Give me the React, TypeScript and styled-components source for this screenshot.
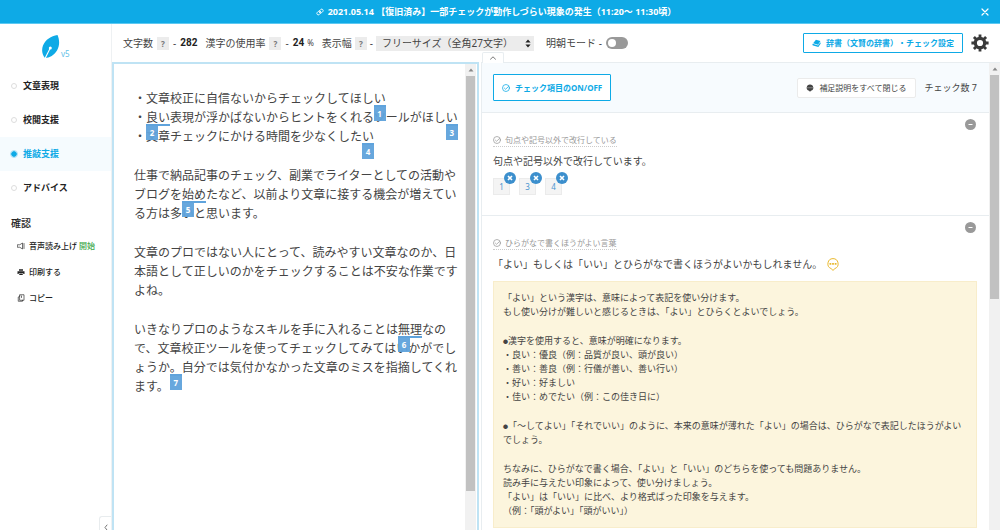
import React, { useState } from "react";
import styled, { createGlobalStyle, css } from "styled-components";

const blue = "#0eaae6";
const paleBlue = "#bfe3f4";
const markBlue = "#5fa3dc";
const ink = "#444";

const GlobalStyle = createGlobalStyle`
  *, *::before, *::after { box-sizing: border-box; }
  body {
    margin: 0;
    background: #fff;
    color: ${ink};
    font-family: "Noto Sans", "Noto Sans CJK JP", sans-serif;
    font-size: 10px;
    line-height: 14px;
  }
  button, select, input { font: inherit; color: inherit; margin: 0; }
  button { padding: 0; border: 0; background: none; cursor: pointer; }
  p, h1, h2, h3, ul { margin: 0; padding: 0; font-weight: inherit; font-size: inherit; }
  ul { list-style: none; }
  svg { display: block; flex: none; }
`;

const Shell = styled.div`
  display: flex;
  flex-direction: column;
  height: 100vh;
  overflow: hidden;
`;

const Notice = styled.div`
  display: flex;
  align-items: center;
  flex: none;
  height: 24px;
  padding: 0 10px 0 12px;
  background: ${blue};
  border-bottom: 1px solid #5cc9f2;
  color: #fff;
`;

const NoticeLink = styled.a`
  display: flex;
  align-items: center;
  justify-content: center;
  gap: 4px;
  flex: 1;
  color: inherit;
  font-size: 9px;
  font-weight: 700;
  text-decoration: none;
  text-spacing-trim: space-all;
  white-space: nowrap;
`;

const Body = styled.div`
  display: grid;
  grid-template-columns: 112px minmax(0, 1fr);
  flex: 1;
  min-height: 0;
`;

const Sidebar = styled.aside`
  display: flex;
  flex-direction: column;
  border-right: 1px solid #eef1f3;
  min-height: 0;
`;

const Logo = styled.div`
  display: flex;
  align-items: flex-end;
  gap: 1px;
  height: 45px;
  padding: 0 0 10px 42px;
  color: #63bfe8;
  font-size: 8px;
  line-height: 10px;
`;

const NavItem = styled.label<{ $active: boolean }>`
  display: flex;
  align-items: center;
  gap: 6px;
  height: 34px;
  padding-left: 11px;
  color: #222;
  font-size: 9px;
  font-weight: 700;
  cursor: pointer;
  ${(p) => p.$active && css`background: #f5fbfe; color: ${blue};`}
`;

const Radio = styled.input`
  appearance: none;
  width: 6px;
  height: 6px;
  border: 1px solid #ddd;
  border-radius: 50%;
  &:checked {
    border-color: ${blue};
    background: ${blue};
    outline: 1px solid #a9dff5;
  }
`;

const ToolsHeading = styled.h2`
  margin-top: 8px;
  padding-left: 11px;
  color: #222;
  font-size: 10px;
  font-weight: 500;
  line-height: 20px;
`;

const ToolButton = styled.button`
  display: flex;
  align-items: center;
  gap: 4px;
  height: 26px;
  padding-left: 17px;
  color: #222;
  font-size: 8px;
  font-weight: 500;
`;

const Start = styled.span`
  color: #3fa94c;
  margin-left: -2px;
`;

const CollapseSide = styled.button`
  display: flex;
  justify-content: center;
  align-items: flex-end;
  align-self: flex-end;
  width: 12px;
  height: 14px;
  margin-top: auto;
  border: 1px solid #e8ecee;
  border-width: 1px 0 0 1px;
  border-radius: 3px 0 0 0;
`;

const Main = styled.main`
  display: flex;
  flex-direction: column;
  min-width: 0;
  min-height: 0;
`;

const Toolbar = styled.div`
  display: flex;
  align-items: center;
  flex: none;
  height: 38px;
  padding: 0 11px;
  white-space: nowrap;
`;

const Stat = styled.div`
  display: flex;
  align-items: center;
  gap: 4px;
  margin-right: 8px;
`;

const Field = styled(Stat)`
  gap: 3px;
  margin-right: 12px;
`;

const Value = styled.strong`
  color: #222;
  font-family: Roboto, sans-serif;
  font-size: 10px;
`;

const Unit = styled.span`
  font-size: 8px;
  margin-left: -1px;
`;

const Help = styled.button`
  width: 12px;
  height: 13px;
  background: #ececec;
  color: #777;
  font-size: 8px;
  font-weight: 700;
  line-height: 13px;
`;

const SelectWrap = styled.span`
  display: flex;
  align-items: center;
  width: 158px;
  height: 15px;
  padding-right: 3px;
  background: #ececec;
`;

const WidthSelect = styled.select`
  appearance: none;
  flex: 1;
  min-width: 0;
  height: 15px;
  padding: 0 0 0 6px;
  border: 0;
  background: none;
  line-height: 15px;
`;

const Switch = styled.input`
  appearance: none;
  display: flex;
  align-items: center;
  width: 22px;
  height: 12px;
  padding: 0 2px;
  border-radius: 6px;
  background: #999;
  cursor: pointer;
  &::before {
    content: "";
    width: 8px;
    height: 8px;
    border-radius: 50%;
    background: #fff;
  }
  &:checked { background: ${blue}; justify-content: flex-end; }
`;

const OutlineButton = styled.button<{ $tall?: boolean }>`
  display: flex;
  align-items: center;
  justify-content: center;
  gap: 5px;
  height: ${(p) => (p.$tall ? 27 : 20)}px;
  padding: 0 8px;
  border: 1px solid ${blue};
  border-radius: 1px;
  background: #fff;
  color: ${blue};
  font-size: 8px;
  font-weight: 700;
  white-space: nowrap;
`;

const DictionaryButton = styled(OutlineButton)`
  margin: 0 8px 0 auto;
  text-spacing-trim: space-all;
`;

const Panes = styled.div`
  display: grid;
  grid-template-columns: minmax(0, 367fr) minmax(0, 519fr);
  gap: 2px;
  flex: 1;
  min-height: 0;
`;

const Editor = styled.section`
  display: flex;
  min-height: 0;
  padding-right: 1px;
  border: 2px solid ${paleBlue};
  border-bottom: 0;
`;

const Draft = styled.article`
  flex: 1;
  min-width: 0;
  padding: 25px 7px 0 20px;
  font-size: 12px;
  line-height: 19px;
  white-space: nowrap;
`;

const Paragraph = styled.p`
  margin-bottom: 20px;
`;

const Mark = styled.span`
  position: relative;
  &::after {
    content: "";
    position: absolute;
    left: 0;
    right: 0;
    bottom: 0;
    height: 2px;
    background: ${markBlue};
  }
`;

const MarkNumber = styled.span`
  position: absolute;
  top: 100%;
  left: 0;
  width: 12px;
  height: 14px;
  background: ${markBlue};
  opacity: 0.95;
  color: #fff;
  font-size: 8px;
  font-weight: 700;
  line-height: 14px;
  text-align: center;
`;

const Track = styled.div`
  display: flex;
  flex-direction: column;
  align-items: center;
  flex: none;
  width: 11px;
  background: #f1f1f1;
`;

const TrackArrow = styled.div`
  display: flex;
  align-items: center;
  justify-content: center;
  flex: none;
  height: 12px;
`;

const Thumb = styled.div<{ $share: number }>`
  width: 9px;
  height: ${(p) => p.$share}%;
  background: #c1c1c1;
`;

const Results = styled.section`
  position: relative;
  display: flex;
  min-height: 0;
  border-top: 1px solid #e8edf0;
  border-left: 1px solid #e8edf0;
`;

const FoldTab = styled.button`
  position: absolute;
  left: 0;
  bottom: 100%;
  display: flex;
  align-items: center;
  justify-content: center;
  width: 22px;
  height: 11px;
  border: 1px solid #e8edf0;
  border-bottom: 0;
  border-radius: 2px 2px 0 0;
  background: #fff;
`;

const ResultsScroll = styled.div`
  flex: 1;
  min-width: 0;
  overflow: hidden;
`;

const ResultsHead = styled.header`
  display: flex;
  align-items: center;
  height: 50px;
  padding: 0 12px 0 11px;
  border-bottom: 1px solid #e8edf0;
  background: #f7fbfe;
`;

const QuietButton = styled.button`
  display: flex;
  align-items: center;
  justify-content: center;
  gap: 5px;
  height: 20px;
  margin: 0 9px 0 auto;
  padding: 0 8px;
  border: 1px solid #ebebeb;
  border-radius: 2px;
  background: #fff;
  font-size: 8px;
`;

const Count = styled.span`
  font-size: 9px;
`;

const Issue = styled.article`
  position: relative;
  padding: 20px 12px 20px 11px;
  border-bottom: 1px solid #e8edf0;
`;

const Remove = styled.button`
  position: absolute;
  top: 6px;
  right: 13px;
  display: flex;
  align-items: center;
  justify-content: center;
  width: 11px;
  height: 11px;
  border-radius: 50%;
  background: #999;
`;

const IssueLabel = styled.h3`
  display: flex;
  align-items: center;
  gap: 4px;
  width: fit-content;
  height: 14px;
  border-bottom: 1px dotted #ccc;
  color: #999;
  font-size: 8px;
`;

const IssueTitle = styled.p`
  display: flex;
  align-items: center;
  gap: 5px;
  margin: 5px 0 8px;
  font-size: 10px;
  line-height: 18px;
`;

const Chips = styled.ul`
  display: flex;
  gap: 9px;
`;

const Chip = styled.li`
  position: relative;
  width: 17px;
  height: 17px;
  border: 1px solid #ebebeb;
  background: #f4f4f4;
  color: #4a95cf;
  font-size: 8px;
  line-height: 15px;
  text-align: center;
`;

const ChipClose = styled.button`
  position: absolute;
  top: -7px;
  right: -7px;
  display: flex;
  align-items: center;
  justify-content: center;
  width: 12px;
  height: 12px;
  border-radius: 50%;
  background: #3c8fcd;
`;

const Explanation = styled.div`
  display: flex;
  flex-direction: column;
  gap: 15px;
  padding: 9px;
  border: 1px solid #f8edcb;
  background: #fcf5dd;
  font-size: 9px;
  line-height: 14px;
`;

const Bullet = styled.span`
  font-size: 5px;
  vertical-align: 1px;
  line-height: 1;
`;

const strokeProps = {
  fill: "none",
  stroke: "currentColor",
  strokeLinecap: "round",
  strokeLinejoin: "round",
} as const;

const LinkIcon = () => (
  <svg width="8" height="8" viewBox="0 0 16 16" {...strokeProps} strokeWidth="1.8">
    <path d="M7 9.5a3 3 0 0 1 0-4l3-3a3 3 0 0 1 4 4l-3 3a3 3 0 0 1-2.500 .6" />
    <path d="M9 6.500a3 3 0 0 1 0 4l-3 3a3 3 0 0 1-4-4l3-3a3 3 0 0 1 2.500-.6" />
  </svg>
);

const CloseIcon = () => (
  <svg width="10" height="10" viewBox="0 0 10 10" {...strokeProps} strokeWidth="1.200">
    <path d="M2 2l6 6M8 2l-6 6" />
  </svg>
);

const LeafIcon = () => (
  <svg width="18" height="24" viewBox="0 0 18 24">
    <path
      d="M15.500 0C9 1.200 3.500 4.500 1 10.500c-1.500 4-1.200 8.500 2 12.500 4.500 0 9.500-3 12-7.500C18 10.500 17.500 4.500 15.500 0z"
      fill={blue}
    />
    <circle cx="8.300" cy="13" r="1.500" fill="#fff" />
    <path d="M8.300 13L3 23.500" stroke="#fff" strokeWidth="1.100" fill="none" />
  </svg>
);

const SpeakerIcon = () => (
  <svg width="8" height="8" viewBox="0 0 16 16" {...strokeProps} strokeWidth="1.300">
    <path d="M1.500 5.500h4L11 2v12l-5.500-3.500h-4zM14 3v10" />
  </svg>
);

const PrinterIcon = () => (
  <svg width="8" height="8" viewBox="0 0 16 16" fill="currentColor">
    <path d="M4 2.500h8v3H4zM1 6.500h14v5.500h-2.500v-2h-9v2H1zM4.500 11h7v3h-7z" />
  </svg>
);

const CopyIcon = () => (
  <svg width="8" height="8" viewBox="0 0 16 16" {...strokeProps} strokeWidth="1.300">
    <path d="M6 1.500h8v11H6zM6 4L2.500 6v8.500H11v-2M9 4v3" />
  </svg>
);

const SortIcon = () => (
  <svg width="6" height="9" viewBox="0 0 6 9" fill="#222">
    <path d="M3 0.500L5.600 3.600H0.400zM3 8.500L0.400 5.400h5.200z" />
  </svg>
);

const BookIcon = () => (
  <svg width="9" height="9" viewBox="0 0 16 16" fill="currentColor">
    <path d="M7 1.500l8 2.200-4.200 6.300L2 7.500zM1.200 8.500l9.600 3 3.800-5.600.9 2-4.200 6.300L2 11.700C.5 11 .6 9.400 1.200 8.500z" />
  </svg>
);

const GearIcon = () => (
  <svg width="18" height="18" viewBox="0 0 18 18" fill="none" stroke="#3a3a3a">
    <circle cx="9" cy="9" r="4.700" strokeWidth="3.200" />
    {[0, 45, 90, 135].map((angle) => (
      <path
        key={angle}
        d="M9 0.400v3.200M9 14.400v3.200"
        strokeWidth="2.800"
        transform={`rotate(${angle} 9 9)`}
      />
    ))}
  </svg>
);

const CheckCircleIcon = () => (
  <svg width="8" height="8" viewBox="0 0 16 16" {...strokeProps} strokeWidth="1.500">
    <circle cx="8" cy="8" r="7" />
    <path d="M4.800 8.200l2.400 2.300L13 5" />
  </svg>
);

const BubbleIcon = () => (
  <svg width="8" height="8" viewBox="0 0 16 16">
    <path d="M8 1a6.500 6.500 0 0 1 2 12.700L8 15.500l-2-1.800A6.500 6.500 0 0 1 8 1z" fill="#444" />
    <path d="M1 7.500h14" stroke="#999" strokeWidth="1.500" />
  </svg>
);

const HintIcon = () => (
  <svg width="12" height="13" viewBox="0 0 12 13" fill="none" stroke="#e9b92f">
    <path d="M6 0.600a5.200 5.200 0 0 1 1.900 10L6 12.400l-1.900-1.800A5.200 5.200 0 0 1 6 0.600z" />
    <path d="M2.500 5.900h7" strokeWidth="1.600" strokeDasharray="1.800 0.800" />
  </svg>
);

const Chevron = ({ left }: { left?: boolean }) => (
  <svg width="8" height="8" viewBox="0 0 8 8" {...strokeProps} stroke="#777">
    <path d={left ? "M5 3L3 5.500L5 8" : "M1.500 5.200L4 2.800l2.500 2.400"} />
  </svg>
);

const MinusIcon = () => (
  <svg width="7" height="7" viewBox="0 0 7 7">
    <path d="M1.500 3.500h4" stroke="#fff" />
  </svg>
);

const CrossIcon = () => (
  <svg width="6" height="6" viewBox="0 0 6 6">
    <path d="M1 1l4 4M5 1L1 5" stroke="#fff" strokeWidth="1.600" />
  </svg>
);

const ScrollBar = ({ share }: { share: number }) => (
  <Track aria-hidden="true">
    <TrackArrow>
      <svg width="6" height="4" viewBox="0 0 6 4" fill="#888">
        <path d="M3 0.500L5.500 3.500h-5z" />
      </svg>
    </TrackArrow>
    <Thumb $share={share} />
  </Track>
);

const Flag = ({ n, children }: { n: number; children: React.ReactNode }) => (
  <Mark>
    {children}
    <MarkNumber>{n}</MarkNumber>
  </Mark>
);

const modes = ["文章表現", "校閲支援", "推敲支援", "アドバイス"];

export default function App() {
  const [mode, setMode] = useState("推敲支援");

  return (
    <Shell>
      <GlobalStyle />
      <Notice>
        <NoticeLink href="#notice">
          <LinkIcon />
          2021.05.14 【復旧済み】一部チェックが動作しづらい現象の発生（11:20〜 11:30頃）
        </NoticeLink>
        <button aria-label="閉じる"><CloseIcon /></button>
      </Notice>
      <Body>
        <Sidebar>
          <Logo><LeafIcon />v5</Logo>
          <nav>
            {modes.map((name) => (
              <NavItem key={name} $active={mode === name}>
                <Radio type="radio" name="mode" checked={mode === name} onChange={() => setMode(name)} />
                {name}
              </NavItem>
            ))}
          </nav>
          <ToolsHeading>確認</ToolsHeading>
          <ToolButton><SpeakerIcon />音声読み上げ <Start>開始</Start></ToolButton>
          <ToolButton><PrinterIcon />印刷する</ToolButton>
          <ToolButton><CopyIcon />コピー</ToolButton>
          <CollapseSide aria-label="サイドバーを閉じる"><Chevron left /></CollapseSide>
        </Sidebar>
        <Main>
          <Toolbar>
            <Stat>文字数 <Help>?</Help> - <Value>282</Value></Stat>
            <Stat>漢字の使用率 <Help>?</Help> - <Value>24</Value><Unit>%</Unit></Stat>
            <Field>
              <label htmlFor="width">表示幅</label> <Help>?</Help> -
              <SelectWrap>
                <WidthSelect id="width"><option>フリーサイズ（全角27文字）</option></WidthSelect>
                <SortIcon />
              </SelectWrap>
            </Field>
            <Stat as="label">明朝モード - <Switch type="checkbox" /></Stat>
            <DictionaryButton><BookIcon />辞書（文賢の辞書）・チェック設定</DictionaryButton>
            <button aria-label="設定"><GearIcon /></button>
          </Toolbar>
          <Panes>
            <Editor>
              <Draft>
                <Paragraph>
                  ・文章校正に自信ないからチェックしてほし<Flag n={1}>い</Flag><br />
                  ・<Flag n={2}>良い</Flag>表現が浮かばないからヒントをくれるツールがほし<Flag n={3}>い</Flag><br />
                  ・文章チェックにかける時間を少なくした<Flag n={4}>い</Flag>
                </Paragraph>
                <Paragraph>
                  仕事で納品記事のチェック、副業でライターとしての活動や<br />
                  ブログを<Flag n={5}>始め</Flag>たなど、以前より文章に接する機会が増えてい<br />
                  る方は多いと思います。
                </Paragraph>
                <Paragraph>
                  文章のプロではない人にとって、読みやすい文章なのか、日<br />
                  本語として正しいのかをチェックすることは不安な作業です<br />
                  よね。
                </Paragraph>
                <Paragraph>
                  いきなりプロのようなスキルを手に入れることは<Flag n={6}>無理</Flag>なの<br />
                  で、文章校正ツールを使ってチェックしてみてはいかがでし<br />
                  ょうか<Flag n={7}>。</Flag>自分では気付かなかった文章のミスを指摘してくれ<br />
                  ます。
                </Paragraph>
              </Draft>
              <ScrollBar share={89} />
            </Editor>
            <Results>
              <FoldTab aria-label="折りたたむ"><Chevron /></FoldTab>
              <ResultsScroll>
                <ResultsHead>
                  <OutlineButton $tall><CheckCircleIcon />チェック項目のON/OFF</OutlineButton>
                  <QuietButton><BubbleIcon />補足説明をすべて閉じる</QuietButton>
                  <Count>チェック数 7</Count>
                </ResultsHead>
                <Issue>
                  <Remove aria-label="閉じる"><MinusIcon /></Remove>
                  <IssueLabel><CheckCircleIcon />句点や記号以外で改行している</IssueLabel>
                  <IssueTitle>句点や記号以外で改行しています。</IssueTitle>
                  <Chips>
                    {[1, 3, 4].map((n) => (
                      <Chip key={n}>
                        {n}
                        <ChipClose aria-label="除外"><CrossIcon /></ChipClose>
                      </Chip>
                    ))}
                  </Chips>
                </Issue>
                <Issue>
                  <Remove aria-label="閉じる"><MinusIcon /></Remove>
                  <IssueLabel><CheckCircleIcon />ひらがなで書くほうがよい言葉</IssueLabel>
                  <IssueTitle>「よい」もしくは「いい」とひらがなで書くほうがよいかもしれません。<HintIcon /></IssueTitle>
                  <Explanation>
                    <p>
                      「よい」という漢字は、意味によって表記を使い分けます。<br />
                      もし使い分けが難しいと感じるときは、「よい」とひらくとよいでしょう。
                    </p>
                    <p>
                      <Bullet>●</Bullet>漢字を使用すると、意味が明確になります。<br />
                      ・良い：優良（例：品質が良い、頭が良い）<br />
                      ・善い：善良（例：行儀が善い、善い行い）<br />
                      ・好い：好ましい<br />
                      ・佳い：めでたい（例：この佳き日に）
                    </p>
                    <p>
                      <Bullet>●</Bullet>「〜してよい」「それでいい」のように、本来の意味が薄れた「よい」の場合は、ひらがなで表記したほうがよいでしょう。
                    </p>
                    <p>
                      ちなみに、ひらがなで書く場合、「よい」と「いい」のどちらを使っても問題ありません。<br />
                      読み手に与えたい印象によって、使い分けましょう。<br />
                      「よい」は「いい」に比べ、より格式ばった印象を与えます。<br />
                      （例：「頭がよい」「頭がいい」）
                    </p>
                  </Explanation>
                </Issue>
              </ResultsScroll>
              <ScrollBar share={48} />
            </Results>
          </Panes>
        </Main>
      </Body>
    </Shell>
  );
}
